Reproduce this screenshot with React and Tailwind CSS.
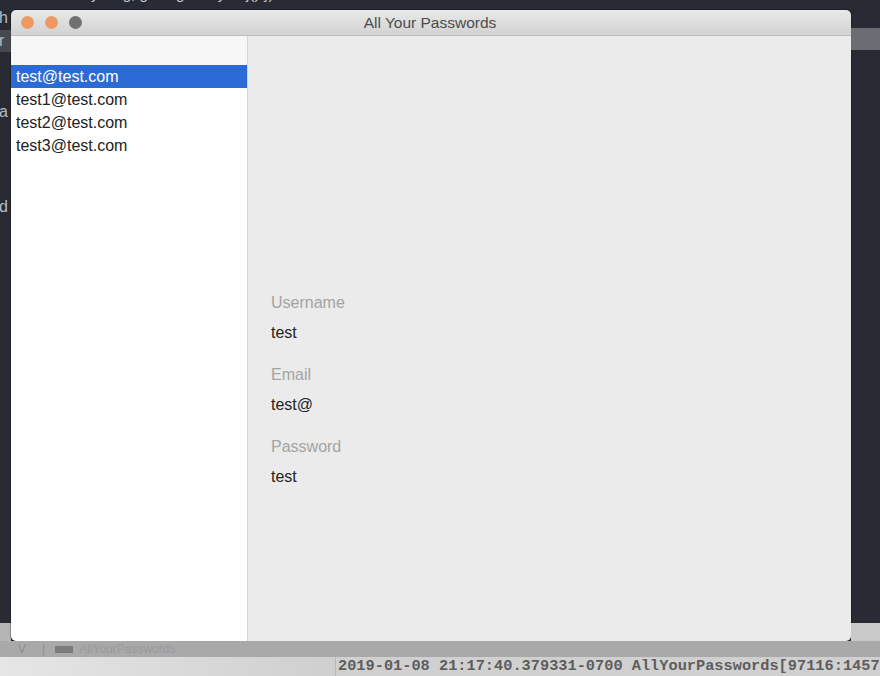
export default function App() {
  const items = ["test@test.com", "test1@test.com", "test2@test.com", "test3@test.com"];
  const fields = [
    ["Username", "test"],
    ["Email", "test@"],
    ["Password", "test"],
  ];
  return (
    <div className="w-[880px] h-[676px] bg-[#282b34] flex flex-col overflow-hidden font-['Liberation_Sans',Arial,sans-serif]">
      <div className="flex h-[641px]">
        {/* left gutter */}
        <div className="w-[11px] flex flex-col">
          <div className="flex-1 relative overflow-hidden text-[#b9bcc2] text-[16px] leading-none">
            <div className="absolute left-[-1px] top-[10px]">h</div>
            <div className="absolute left-[-1px] top-[30px] w-[12px] h-[22px] bg-[#5a5d63] opacity-60" />
            <div className="absolute left-[-1px] top-[33px]">r</div>
            <div className="absolute left-[-1px] top-[104px]">a</div>
            <div className="absolute left-[-1px] top-[199px]">d</div>
          </div>
          <div className="h-[18px] bg-[#b4b4b5]" />
        </div>
        {/* window column */}
        <div className="w-[840px] flex flex-col">
          <div className="h-[10px] relative overflow-hidden">
            <div className="absolute left-[30px] top-[-17px] text-[15px] text-[#c8cbd0] whitespace-pre">
              {"        anything, getting every obj() })"}
            </div>
          </div>
          <div className="flex-1 flex flex-col rounded-[5px] overflow-hidden shadow-[0_0_0_1px_rgba(0,0,0,0.25)]">
            {/* title bar */}
            <div className="h-[26px] bg-gradient-to-b from-[#e9e9e9] to-[#d2d2d2] border-b border-[#bdbdbd] flex items-center relative">
              <div className="flex items-center gap-[11px] pl-[10px]">
                <div className="w-[13px] h-[13px] rounded-full bg-[#ee9a62]" />
                <div className="w-[13px] h-[13px] rounded-full bg-[#ee9a62]" />
                <div className="w-[13px] h-[13px] rounded-full bg-[#707172]" />
              </div>
              <div className="absolute inset-0 flex items-center justify-center text-[15.5px] text-[#4c4c4c]">
                <span className="ml-[-2px]">All Your Passwords</span>
              </div>
            </div>
            {/* body */}
            <div className="flex-1 flex">
              <div className="w-[237px] bg-white border-r border-[#d4d4d4] flex flex-col">
                <div className="h-[29px] bg-[#f6f6f6]" />
                {items.map((t, i) => (
                  <div
                    key={t}
                    className={
                      i === 0
                        ? "h-[23px] flex items-center pl-[5px] bg-[#2c6bd5] text-white text-[16px]"
                        : "h-[23px] flex items-center pl-[5px] text-[#222222] text-[16px]"
                    }
                  >
                    {t}
                  </div>
                ))}
              </div>
              <div className="flex-1 bg-[#ebebeb] pt-[257px] pl-[23px] flex flex-col">
                {fields.map(([l, v]) => (
                  <div key={l} className="flex flex-col h-[72px]">
                    <div className="h-[20px] flex items-center text-[16px] text-[#a3a3a3]">{l}</div>
                    <div className="h-[20px] mt-[10px] flex items-center text-[16px] text-[#222222]">{v}</div>
                  </div>
                ))}
              </div>
            </div>
          </div>
        </div>
        {/* right gutter */}
        <div className="flex-1 flex flex-col">
          <div className="h-[28px]" />
          <div className="h-[22px] bg-[#7c7e83] opacity-80" />
          <div className="flex-1" />
          <div className="h-[18px] bg-[#c9c9ca]" />
        </div>
      </div>
      {/* bottom strip */}
      <div className="h-[16px] bg-[#a9a9aa] flex items-center text-[12px] text-[#9a9a9b]">
        <span className="ml-[18px] text-[#8e8e8e]">V</span>
        <span className="ml-[16px] text-[#8e8e8e]">|</span>
        <div className="ml-[10px] w-[18px] h-[7px] bg-[#7a7a7a] rounded-[1px]" />
        <span className="ml-[6px]">AllYourPasswords</span>
      </div>
      <div className="h-[19px] flex">
        <div className="w-[335px] bg-gradient-to-r from-[#e6e6e6] to-[#cfcfcf]" />
        <div className="flex-1 bg-[#d0d0d0] border-l border-[#b8b8b8] flex items-center pl-[2px] overflow-hidden whitespace-nowrap font-['Liberation_Mono',monospace] font-bold text-[15.3px] text-[#5d5d5d]">
          2019-01-08 21:17:40.379331-0700 AllYourPasswords[97116:1457
        </div>
      </div>
    </div>
  );
}
